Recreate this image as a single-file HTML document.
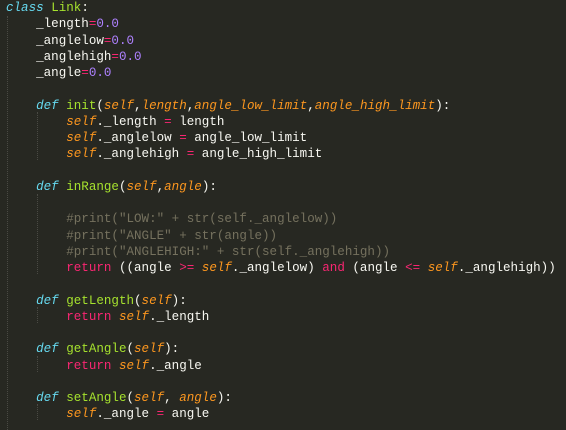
<!DOCTYPE html><html><head><style>
body{margin:0;background:#272822;width:566px;height:430px;overflow:hidden}
pre{margin:0;padding:0 0 0 6px;font-family:"Liberation Mono",monospace;font-size:12.55px;line-height:16.25px;color:#f8f8f2;position:relative}
.k{color:#66d9ef;font-style:italic}.f{color:#a6e22e}.s{color:#fd971f;font-style:italic}.n{color:#ae81ff}.o{color:#f92672}.c{color:#75715e}
.g{position:absolute;width:0;border-left:1px dotted #4a4a44}
</style></head><body>
<div class="g" style="left:7px;top:16px;height:414px"></div>
<div class="g" style="left:37px;top:112px;height:48px"></div>
<div class="g" style="left:37px;top:194px;height:80px"></div>
<div class="g" style="left:37px;top:307px;height:16px"></div>
<div class="g" style="left:37px;top:356px;height:16px"></div>
<div class="g" style="left:37px;top:404px;height:16px"></div>
<pre><span class="k">class</span> <span class="f">Link</span>:
    _length<span class="o">=</span><span class="n">0.0</span>
    _anglelow<span class="o">=</span><span class="n">0.0</span>
    _anglehigh<span class="o">=</span><span class="n">0.0</span>
    _angle<span class="o">=</span><span class="n">0.0</span>

    <span class="k">def</span> <span class="f">init</span>(<span class="s">self</span>,<span class="s">length</span>,<span class="s">angle_low_limit</span>,<span class="s">angle_high_limit</span>):
        <span class="s">self</span>._length <span class="o">=</span> length
        <span class="s">self</span>._anglelow <span class="o">=</span> angle_low_limit
        <span class="s">self</span>._anglehigh <span class="o">=</span> angle_high_limit

    <span class="k">def</span> <span class="f">inRange</span>(<span class="s">self</span>,<span class="s">angle</span>):

        <span class="c">#print("LOW:" + str(self._anglelow))</span>
        <span class="c">#print("ANGLE" + str(angle))</span>
        <span class="c">#print("ANGLEHIGH:" + str(self._anglehigh))</span>
        <span class="o">return</span> ((angle <span class="o">&gt;=</span> <span class="s">self</span>._anglelow) <span class="o">and</span> (angle <span class="o">&lt;=</span> <span class="s">self</span>._anglehigh))

    <span class="k">def</span> <span class="f">getLength</span>(<span class="s">self</span>):
        <span class="o">return</span> <span class="s">self</span>._length

    <span class="k">def</span> <span class="f">getAngle</span>(<span class="s">self</span>):
        <span class="o">return</span> <span class="s">self</span>._angle

    <span class="k">def</span> <span class="f">setAngle</span>(<span class="s">self</span>, <span class="s">angle</span>):
        <span class="s">self</span>._angle <span class="o">=</span> angle
</pre></body></html>
